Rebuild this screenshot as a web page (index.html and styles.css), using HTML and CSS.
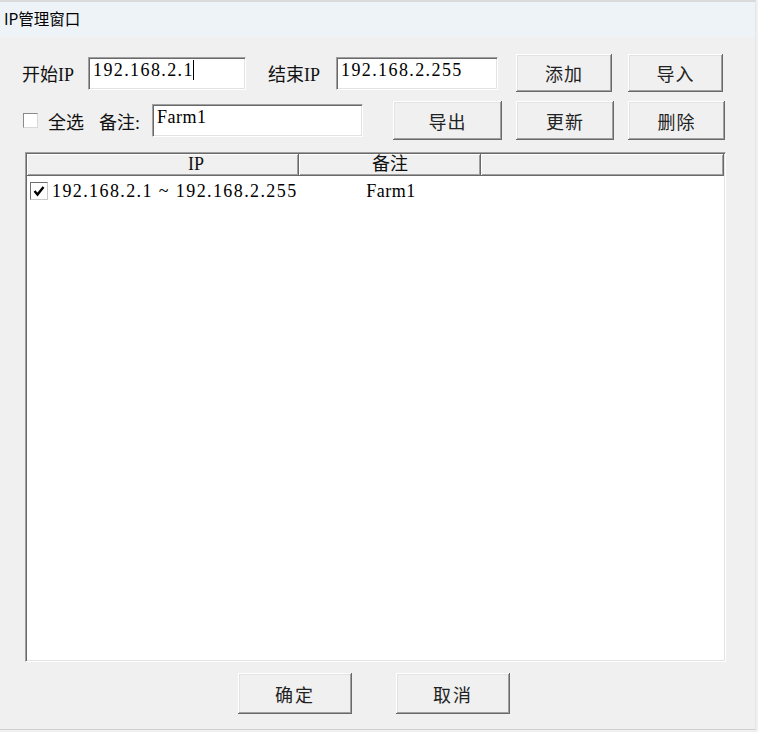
FILE: index.html
```html
<!DOCTYPE html>
<html lang="zh-CN">
<head>
<meta charset="utf-8">
<title>IP管理窗口</title>
<link rel="stylesheet" href="styles.css">
</head>
<body>
<div class="window">
  <div class="titlebar">IP管理窗口</div>
  <div class="content">
    <div class="row row1">
      <span class="label l-start">开始IP</span>
      <div class="field f-start">192.168.2.1<span class="caret"></span></div>
      <span class="label l-end">结束IP</span>
      <div class="field f-end">192.168.2.255</div>
      <button class="btn b-add">添加</button>
      <button class="btn b-import">导入</button>
    </div>
    <div class="row row2">
      <span class="check"></span>
      <span class="label l-all">全选</span>
      <span class="label l-note">备注:</span>
      <div class="field f-note">Farm1</div>
      <button class="btn b-export">导出</button>
      <button class="btn b-update">更新</button>
      <button class="btn b-delete">删除</button>
    </div>
    <div class="list">
      <div class="list-head">
        <div class="hcell h-ip">IP</div>
        <div class="hcell h-note">备注</div>
        <div class="hcell h-rest"></div>
      </div>
      <div class="list-body">
        <div class="list-row">
          <span class="row-check"><svg width="14" height="14" viewBox="0 0 14 14"><path d="M2.5 7 L5.5 10.5 L11.5 3" fill="none" stroke="#000" stroke-width="2.4"/></svg></span>
          <span class="c-ip">192.168.2.1 ~ 192.168.2.255</span>
          <span class="c-note">Farm1</span>
        </div>
      </div>
    </div>
    <div class="footer">
      <button class="btn b-ok">确定</button>
      <button class="btn b-cancel">取消</button>
    </div>
  </div>
</div>
</body>
</html>
```
FILE: styles.css
```css
html, body {
  margin: 0;
  padding: 0;
  background: #f0f0f0;
}
.window {
  width: 756px;
  height: 730px;
  box-sizing: border-box;
  border-top: 2px solid #dadada;
  border-right: 1px solid #e6e6e6;
  border-bottom: 1px solid #d0d0d0;
  background: #f0f0f0;
  position: relative;
  font-family: "Liberation Serif", "Noto Sans CJK SC", serif;
  font-size: 18px;
  color: #111;
}
.titlebar {
  height: 35px;
  background: #eef3f8;
  font-family: "Noto Sans CJK SC", sans-serif;
  font-size: 15.5px;
  line-height: 33px;
  padding-left: 4px;
  color: #000;
}
.content {
  padding: 17px 0 0 22px;
}
.row {
  display: flex;
  align-items: center;
}
.row > * { flex: none; }
.row1 { height: 38px; }
.row2 { height: 39px; margin-top: 9px; }
.label {
  white-space: nowrap;
  letter-spacing: 0;
}
.l-start { width: 66px; }
.l-end { width: 68px; margin-left: 22px; }
.l-all { width: 51px; margin-left: 10px; }
.l-note { width: 53px; }
.field {
  box-sizing: border-box;
  height: 33px;
  background: #fff;
  border-top: 1px solid #a0a0a0;
  border-left: 1px solid #a0a0a0;
  border-bottom: 1px solid #ffffff;
  border-right: 1px solid #ffffff;
  box-shadow: inset 1px 1px 0 #696969, inset -1px -1px 0 #e3e3e3;
  padding: 1px 0 0 4px;
  line-height: 22px;
  letter-spacing: 1.4px;
  white-space: nowrap;
  color: #000;
}
.f-start { width: 158px; }
.f-end { width: 162px; }
.f-note { width: 211px; letter-spacing: 0.5px; }
.caret {
  display: inline-block;
  width: 1px;
  height: 20px;
  background: #000;
  vertical-align: -4px;
  margin-left: -1px;
}
.btn {
  box-sizing: border-box;
  background: #f0f0f0;
  border: none;
  padding: 0;
  font-family: "Liberation Serif", "Noto Sans CJK SC", serif;
  font-size: 18px;
  color: #222;
  letter-spacing: 1px;
  box-shadow: inset -1px -1px 0 #696969, inset 1px 1px 0 #ffffff, inset -2px -2px 0 #a0a0a0, inset 2px 2px 0 #e3e3e3;
}
.b-add { width: 96px; height: 38px; margin-left: 18px; }
.b-import { width: 95px; height: 38px; margin-left: 16px; }
.b-export { width: 109px; height: 39px; margin-left: 30px; }
.b-update { width: 98px; height: 39px; margin-left: 14px; }
.b-delete { width: 97px; height: 39px; margin-left: 14px; }
.check {
  box-sizing: border-box;
  width: 15px;
  height: 15px;
  margin-left: 1px;
  background: #fff;
  border: 1px solid #8a8a8a;
  border-right-color: #d8d8d8;
  border-bottom-color: #d8d8d8;
}
.list {
  box-sizing: border-box;
  width: 701px;
  height: 510px;
  margin-top: 12px;
  margin-left: 3px;
  background: #fff;
  border-top: 1px solid #a0a0a0;
  border-left: 1px solid #a0a0a0;
  border-bottom: 1px solid #fff;
  border-right: 1px solid #fff;
  box-shadow: inset 1px 1px 0 #696969, inset -1px -1px 0 #e3e3e3;
  padding: 1px;
  display: flex;
  flex-direction: column;
}
.list-head {
  display: flex;
  height: 22px;
  background: #f0f0f0;
  flex: none;
}
.hcell {
  box-sizing: border-box;
  flex: none;
  height: 22px;
  line-height: 21px;
  text-align: center;
  box-shadow: inset -1px -1px 0 #696969, inset 1px 1px 0 #ffffff, inset -2px -2px 0 #a0a0a0;
  color: #111;
}
.h-ip { width: 272px; padding-left: 66px; }
.h-note { width: 182px; }
.h-rest { flex: 1; }
.list-body {
  flex: 1;
}
.list-row {
  display: flex;
  align-items: center;
  height: 24px;
  margin-top: 3px;
}
.list-row > * { flex: none; }
.row-check {
  box-sizing: border-box;
  width: 18px;
  height: 18px;
  margin-left: 3px;
  background: #fff;
  border: 1px solid #6e6e6e;
  border-right-color: #c8c8c8;
  border-bottom-color: #c8c8c8;
  display: flex;
  align-items: center;
  justify-content: center;
}
.c-ip {
  width: 248px;
  margin-left: 4px;
  letter-spacing: 1.4px;
  white-space: nowrap;
  color: #000;
}
.c-note {
  width: 182px;
  text-align: center;
  letter-spacing: 0.5px;
  color: #000;
}
.footer {
  display: flex;
  margin-top: 11px;
  padding-left: 216px;
  gap: 44px;
}
.b-ok, .b-cancel {
  width: 114px;
  height: 41px;
  letter-spacing: 2px;
}
```
